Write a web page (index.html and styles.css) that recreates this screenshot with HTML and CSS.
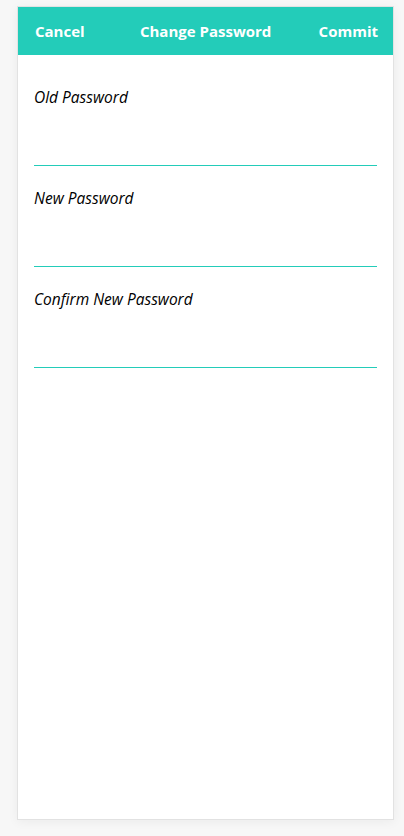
FILE: index.html
```html
<!DOCTYPE html>
<html lang="en">
<head>
<meta charset="utf-8">
<title>Change Password</title>
<link rel="stylesheet" href="styles.css">
</head>
<body>
<div class="card">
  <header class="bar">
    <span class="bar-btn">Cancel</span>
    <span class="bar-title">Change Password</span>
    <span class="bar-btn">Commit</span>
  </header>
  <form class="form">
    <div class="field">
      <label class="label">Old Password</label>
      <input class="input" type="password">
    </div>
    <div class="field">
      <label class="label">New Password</label>
      <input class="input" type="password">
    </div>
    <div class="field">
      <label class="label">Confirm New Password</label>
      <input class="input" type="password">
    </div>
  </form>
</div>
</body>
</html>
```
FILE: styles.css
```css
html, body {
  margin: 0;
  padding: 0;
}
body {
  background: #f7f7f7;
  font-family: "Open Sans", "Noto Sans", sans-serif;
}
.card {
  margin: 6px 10px 16px 17px;
  height: 812px;
  background: #fff;
  border: 1px solid #e2e2e2;
  box-shadow: 0 2px 10px rgba(0,0,0,0.05);
}
.bar {
  height: 48px;
  background: #23ccb9;
  display: flex;
  align-items: center;
  justify-content: space-between;
  padding: 0 15px 0 17px;
  color: #fff;
  font-weight: bold;
  font-size: 15px;
}
.bar-title {
  padding-left: 8px;
}
.form {
  padding: 10px 16px 0 16px;
}
.field {
  padding-top: 22px;
  border-bottom: 1px solid #23ccb9;
}
.label {
  display: block;
  font-style: italic;
  font-weight: 400;
  font-size: 15.5px;
  line-height: 20px;
  color: #000;
}
.input {
  display: block;
  width: 100%;
  box-sizing: border-box;
  height: 58px;
  border: 0;
  outline: none;
  background: transparent;
  padding: 0;
}
```
